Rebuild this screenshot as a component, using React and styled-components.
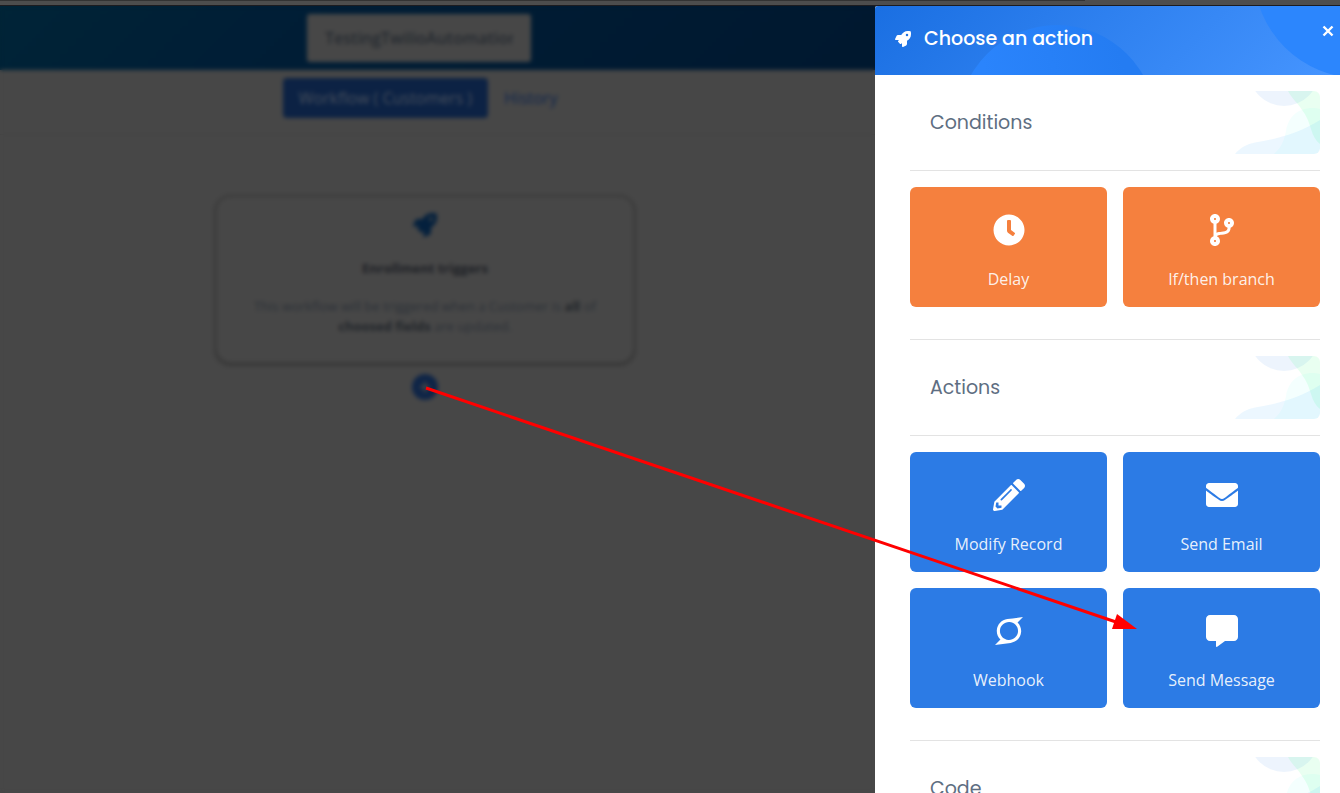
import React from 'react'
import styled, { createGlobalStyle } from 'styled-components'
import {
  FaRocket,
  FaClock,
  FaCodeBranch,
  FaPencilAlt,
  FaEnvelope,
  FaSuperpowers,
  FaCommentAlt,
  FaPlus,
} from 'react-icons/fa'

const sections = [
  {
    title: 'Conditions',
    color: '#f5803e',
    actions: [
      { label: 'Delay', icon: FaClock },
      { label: 'If/then branch', icon: FaCodeBranch },
    ],
  },
  {
    title: 'Actions',
    color: '#2c7be5',
    actions: [
      { label: 'Modify Record', icon: FaPencilAlt },
      { label: 'Send Email', icon: FaEnvelope },
      { label: 'Webhook', icon: FaSuperpowers },
      { label: 'Send Message', icon: FaCommentAlt },
    ],
  },
  { title: 'Code', color: '#2c7be5', actions: [] },
]

const HeaderShapes = () => (
  <HeaderArt viewBox="0 0 465 69" preserveAspectRatio="none" aria-hidden="true">
    <defs>
      <linearGradient id="hill" gradientUnits="userSpaceOnUse" x1="110" y1="69" x2="240" y2="30">
        <stop offset="0" stopColor="#2a84fc" />
        <stop offset="1" stopColor="#247cf2" />
      </linearGradient>
    </defs>
    <circle cx="182" cy="118" r="99" fill="url(#hill)" />
    <circle cx="484" cy="-33" r="105" fill="#2c86fd" />
  </HeaderArt>
)

const CornerShapes = () => (
  <svg width="90" height="63" viewBox="0 0 90 63" aria-hidden="true">
    <circle cx="54" cy="-20" r="35" fill="#2c7be5" fillOpacity="0.085" />
    <path d="M58 0C62 8 68 12 72 19C78 27 79 32 81 38C83 45 86 50 90 53V0Z" fill="#00ff5a" fillOpacity="0.085" />
    <path d="M44 63C52 56 54 49 56 40C58 26 68 17 82 17C85 17 88 17 90 18V63Z" fill="#00fff0" fillOpacity="0.045" />
    <path d="M5 63C10 57 17 53 25 51.5C46 48 68 43 90 29V63Z" fill="#28a0ff" fillOpacity="0.085" />
  </svg>
)

const ActionSection = ({ title, color, actions }) => (
  <section>
    <SectionHead>
      <h5>{title}</h5>
      <CornerShapes />
    </SectionHead>
    <Divider />
    <Tiles>
      {actions.map(({ label, icon: Icon }) => (
        <Tile key={label} type="button" $color={color}>
          <Icon size={32} />
          <span>{label}</span>
        </Tile>
      ))}
    </Tiles>
  </section>
)

const App = () => {
  return (
    <Page>
      <GlobalStyle />
      <TopStrip />
      <Main>
        <Workspace>
          <Navbar>
            <NameInput aria-label="Workflow name" defaultValue="TestingTwilioAutomation" />
          </Navbar>
          <Tabs>
            <TabLink href="#workflow" $active>Workflow ( Customers )</TabLink>
            <TabLink href="#history">History</TabLink>
          </Tabs>
          <Canvas>
            <TriggerCard>
              <FaRocket size={24} />
              <h6>Enrollment triggers</h6>
              <p>
                This workflow will be triggered when a Customer is <b>all</b> of{' '}
                <b>choosed fields</b> are updated.
              </p>
            </TriggerCard>
            <AddButton type="button" aria-label="Add step">
              <FaPlus size={12} />
            </AddButton>
          </Canvas>
        </Workspace>
        <Drawer>
          <DrawerHeader>
            <HeaderShapes />
            <FaRocket size={16} />
            <h4>Choose an action</h4>
            <CloseButton type="button" aria-label="Close">
              <svg width="12" height="12" viewBox="0 0 12 12">
                <path d="M1.5 1.5L10.5 10.5M10.5 1.5L1.5 10.5" stroke="currentColor" strokeWidth="2.4" />
              </svg>
            </CloseButton>
          </DrawerHeader>
          <DrawerBody>
            {sections.map((section, i) => (
              <React.Fragment key={section.title}>
                {i > 0 && <Divider />}
                <ActionSection {...section} />
              </React.Fragment>
            ))}
          </DrawerBody>
        </Drawer>
      </Main>
      <Pointer viewBox="0 0 1340 793" preserveAspectRatio="none" aria-hidden="true">
        <path d="M426 388L1116 622" stroke="#ff0000" strokeWidth="3" />
        <path d="M1137 629L1117 614L1112 629Z" fill="#ff0000" />
      </Pointer>
    </Page>
  )
}

const GlobalStyle = createGlobalStyle`
  * {
    box-sizing: border-box;
  }
  body {
    margin: 0;
    background: #474747;
    font-family: 'Open Sans', sans-serif;
    font-size: 16px;
    line-height: 24px;
  }
  h4, h5, h6, p {
    margin: 0;
  }
  button, input {
    font: inherit;
  }
`

const Page = styled.div`
  position: relative;
  display: flex;
  flex-direction: column;
  height: 100vh;
  overflow: hidden;
`

const TopStrip = styled.div`
  flex: 0 0 6px;
  background: #4d4d4d;
  border-bottom: 1px solid #1c1c20;

  &::before {
    content: '';
    display: block;
    width: 81%;
    height: 1px;
    background: #333333;
  }
`

const Main = styled.main`
  flex: 1;
  display: flex;
  min-height: 0;
`

const Workspace = styled.div`
  position: relative;
  flex: 1;
  min-width: 0;
  overflow: hidden;
  background: #474747;
  color: #2c3138;

  /* modal backdrop */
  &::after {
    content: '';
    position: absolute;
    inset: 0;
    backdrop-filter: blur(2px);
  }
`

const Navbar = styled.nav`
  display: flex;
  justify-content: center;
  padding: 8px 37px 8px 0;
  background: linear-gradient(135deg, #002437, #001e36 30%, #00182f);
`

const NameInput = styled.input`
  width: 224px;
  height: 48px;
  padding: 0 18px;
  border: 0;
  border-radius: 3px;
  background: #474747;
  color: #262b31;
  font-weight: 600;
`

const Tabs = styled.div`
  display: flex;
  justify-content: center;
  padding: 8px 19px 16px 0;
  border-bottom: 1px solid #434343;
`

const TabLink = styled.a`
  padding: 8px 16px;
  border-radius: 4px;
  background: ${({ $active }) => ($active ? '#0c2244' : 'transparent')};
  color: ${({ $active }) => ($active ? '#474f5c' : '#10264c')};
  text-decoration: none;
`

const Canvas = styled.div`
  display: flex;
  flex-direction: column;
  align-items: center;
  gap: 10px;
  padding: 60px 25px 0 0;
`

const TriggerCard = styled.div`
  display: flex;
  flex-direction: column;
  align-items: center;
  width: 420px;
  max-width: 100%;
  padding: 16px 36px 26px;
  border: 2px solid #3c3c3c;
  border-radius: 16px;
  box-shadow: 0 1px 3px #2c2c2c;
  background: #474747;
  text-align: center;
  font-size: 13px;
  line-height: 20px;

  svg {
    color: #04203d;
  }
  h6 {
    margin: 21px 0 18px;
    font-size: 13px;
    color: #1e2126;
  }
  b {
    color: #22262b;
  }
`

const AddButton = styled.button`
  display: flex;
  align-items: center;
  justify-content: center;
  width: 26px;
  height: 26px;
  padding: 0;
  border: 0;
  border-radius: 50%;
  background: #0f2547;
  color: #474747;
`

const Drawer = styled.aside`
  flex: 0 0 465px;
  overflow: hidden;
  border-top-left-radius: 3px;
  background: #ffffff;
`

const DrawerHeader = styled.header`
  position: relative;
  display: flex;
  align-items: center;
  gap: 13px;
  height: 69px;
  padding: 0 6px 4px 20px;
  background: linear-gradient(135deg, #1a6fe2, #4695ff);
  color: #ffffff;

  > * {
    position: relative;
  }
  h4 {
    flex: 1;
    font-family: Poppins, Inter, sans-serif;
    font-size: 19px;
    font-weight: 500;
  }
`

const HeaderArt = styled.svg`
  && {
    position: absolute;
  }
  inset: 0;
  width: 100%;
  height: 100%;
`

const CloseButton = styled.button`
  display: flex;
  align-self: flex-start;
  margin-top: 19px;
  padding: 0;
  border: 0;
  background: none;
  color: #ffffff;
`

const DrawerBody = styled.div`
  padding: 16px 20px 0 35px;
`

const SectionHead = styled.div`
  display: flex;
  align-items: center;
  justify-content: space-between;
  height: 63px;
  padding-left: 20px;
  border-radius: 6px;
  overflow: hidden;

  h5 {
    font-family: Poppins, Inter, sans-serif;
    font-size: 19px;
    font-weight: 400;
    color: #5e6e82;
  }
`

const Divider = styled.hr`
  margin: 16px 0;
  border: 0;
  border-top: 1px solid #e3e3e3;
`

const Tiles = styled.div`
  display: grid;
  grid-template-columns: 1fr 1fr;
  gap: 16px;
  padding-bottom: 16px;
`

const Tile = styled.button`
  display: flex;
  flex-direction: column;
  align-items: center;
  gap: 21px;
  height: 120px;
  padding: 27px 0 0;
  border: 0;
  border-radius: 6px;
  background: ${({ $color }) => $color};
  color: #ffffff;

  span {
    color: rgba(255, 255, 255, 0.9);
  }
`

const Pointer = styled.svg`
  position: absolute;
  inset: 0;
  width: 100%;
  height: 100%;
  pointer-events: none;
`

export default App
